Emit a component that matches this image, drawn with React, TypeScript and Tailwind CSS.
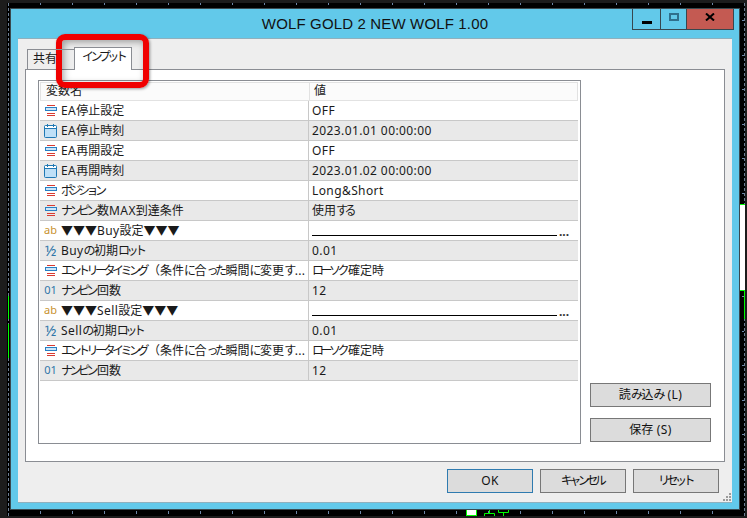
import { Fragment } from "react";

const FONT = "font-['Noto_Sans','Noto_Sans_CJK_JP',sans-serif]";

type Kind = "enum" | "date" | "str" | "frac" | "int";

const rows: { kind: Kind; name: string; value: string }[] = [
  { kind: "enum", name: "EA停止設定", value: "OFF" },
  { kind: "date", name: "EA停止時刻", value: "2023.01.01 00:00:00" },
  { kind: "enum", name: "EA再開設定", value: "OFF" },
  { kind: "date", name: "EA再開時刻", value: "2023.01.02 00:00:00" },
  { kind: "enum", name: "ポジション", value: "Long&Short" },
  { kind: "enum", name: "ナンピン数MAX到達条件", value: "使用する" },
  { kind: "str", name: "▼▼▼Buy設定▼▼▼", value: "" },
  { kind: "frac", name: "Buyの初期ロット", value: "0.01" },
  { kind: "enum", name: "エントリータイミング（条件に合った瞬間に変更す...", value: "ローソク確定時" },
  { kind: "int", name: "ナンピン回数", value: "12" },
  { kind: "str", name: "▼▼▼Sell設定▼▼▼", value: "" },
  { kind: "frac", name: "Sellの初期ロット", value: "0.01" },
  { kind: "enum", name: "エントリータイミング（条件に合った瞬間に変更す...", value: "ローソク確定時" },
  { kind: "int", name: "ナンピン回数", value: "12" },
];

// the reference font has narrow kana and wide latin, so each run gets its own tracking
function Jp({ text }: { text: string }) {
  const parts = text.split(/([\u3041-\u30ff]+|[A-Za-z0-9.:&() ]+)/).filter(Boolean);
  return (
    <>
      {parts.map((part, i) => {
        if (/^[\u3041-\u30ff]/.test(part)) {
          return (
            <span key={i} className="pr-[2px] tracking-[-3.5px]">
              {part}
            </span>
          );
        }
        if (/^[A-Za-z0-9.:&() ]/.test(part)) {
          return (
            <span key={i} className="tracking-[0.4px] whitespace-pre">
              {part}
            </span>
          );
        }
        return <Fragment key={i}>{part}</Fragment>;
      })}
    </>
  );
}

function RowIcon({ kind }: { kind: Kind }) {
  if (kind === "enum") {
    return (
      <svg width="12" height="12" viewBox="0 0 12 12">
        <rect x="2" y="0" width="8" height="1" fill="#d83a32" />
        <rect x="0" y="2" width="12" height="4" fill="#2a80c4" />
        <rect x="1" y="3" width="10" height="2" fill="#cfe6f8" />
        <rect x="2" y="8" width="8" height="1" fill="#d83a32" />
        <rect x="2" y="10" width="8" height="1" fill="#d83a32" />
      </svg>
    );
  }
  if (kind === "date") {
    return (
      <svg width="13" height="14" viewBox="0 0 13 14">
        <rect x="0.5" y="1.5" width="12" height="12" rx="1" fill="#bfe0f7" stroke="#1f78b4" />
        <rect x="1" y="2" width="11" height="2" fill="#fff" />
        <rect x="0.5" y="4" width="12" height="1" fill="#1f78b4" />
        <rect x="3" y="0" width="1" height="3" fill="#1f78b4" />
        <rect x="9" y="0" width="1" height="3" fill="#1f78b4" />
      </svg>
    );
  }
  if (kind === "str") return <span className="text-[11px] text-[#c8922e]">ab</span>;
  if (kind === "frac") return <span className="text-[15px] leading-none text-[#2f75a8]">½</span>;
  return <span className="text-[11px] text-[#2f75a8]">01</span>;
}

function Row({ row, index }: { row: (typeof rows)[number]; index: number }) {
  return (
    <div className={`flex h-5 border-b border-[#c8c8c8] ${index % 2 ? "bg-[#e9e9e9]" : "bg-white"}`}>
      <div className="flex w-[269px] shrink-0 items-center border-r border-[#c8c8c8] whitespace-nowrap">
        <div className="flex w-[21px] shrink-0 justify-center">
          <RowIcon kind={row.kind} />
        </div>
        <span>
          <Jp text={row.name} />
        </span>
      </div>
      <div className="flex flex-1 items-center pl-[3px]">
        {row.kind === "str" ? (
          <div className="flex items-end pt-1.5">
            <div className="h-px w-[245px] bg-black" />
            <span className="ml-0.5 h-1 text-xs leading-[0] font-bold text-[#333]">...</span>
          </div>
        ) : (
          <span>
            <Jp text={row.value} />
          </span>
        )}
      </div>
    </div>
  );
}

function Btn({ label, className }: { label: string; className: string }) {
  return (
    <div className={`flex h-6 items-center justify-center border bg-[#dcdcdc] text-[#111] ${className}`}>
      <span>
        <Jp text={label} />
      </span>
    </div>
  );
}

// ruler ticks and chart scraps showing behind the dialog
function ChartBackdrop() {
  const xs = Array.from({ length: 22 }, (_, i) => 40 + i * 32);
  const ys = Array.from({ length: 14 }, (_, i) => 20 + i * 34.5);
  return (
    <div className="absolute inset-0 overflow-hidden bg-black">
      <div className="absolute inset-x-0 top-0 h-[3px] bg-[#1c1c1c]" />
      <div className="absolute inset-x-0 bottom-0 h-[2px] bg-[#1c1c1c]" />
      <div className="absolute inset-y-0 left-0 w-[7px] bg-[#1c1c1c]" />
      <div className="absolute inset-y-0 right-0 w-0.5 bg-[#1c1c1c]" />
      <div className="absolute top-[3px] bottom-[2px] left-2 border-l border-dashed border-[#6d7f94]" />
      <div className="absolute top-[3px] bottom-[2px] right-[2px] border-l border-dashed border-[#6d7f94]" />
      {xs.map((x) => (
        <div key={x}>
          <div className="absolute top-[3px] h-0.5 w-px bg-[#6d87a8]" style={{ left: x }} />
          <div className="absolute top-[511px] h-[3px] w-px bg-[#6d87a8]" style={{ left: x }} />
        </div>
      ))}
      {ys.map((y) => (
        <div key={y} className="absolute right-[3px] h-px w-0.5 bg-[#6d87a8]" style={{ top: y }} />
      ))}
      <div className="absolute top-[204px] right-[2px] h-[87px] w-[7px] border-y border-l border-[#00ff00] bg-white" />
      <div className="absolute top-[291px] right-[2px] h-7 w-px bg-[#00ff00]" />
      <div className="absolute top-[296px] left-2 h-[23px] w-px bg-[#00ff00]" />
      <div className="absolute top-[324px] left-2 h-[34px] w-px bg-[#00ff00]" />
      <svg className="absolute top-[509px] left-[466px]" width="72" height="9" viewBox="0 0 72 9" fill="none">
        <rect x="0.5" y="0.5" width="10" height="6" fill="#fff" stroke="#00ff00" />
        <path d="M18.5 7V4.5H28.5V7M23.5 4.5V1M32.5 0V3.5H42.5V0M37.5 3.5V7" stroke="#00ff00" />
      </svg>
    </div>
  );
}

export default function App() {
  return (
    <div className={`relative h-[518px] w-[747px] overflow-hidden text-xs text-[#1a1a1a] ${FONT}`}>
      <ChartBackdrop />

      <div className="relative ml-[10px] flex w-[730px] flex-col pt-2">
        <div className="flex h-[502px] flex-col border border-[#3a4a50] bg-[#62c9ea] px-[7px] pb-[6px]">
          {/* title bar */}
          <div className="relative flex h-[29px] shrink-0 items-center justify-center">
            <span className="font-['Liberation_Sans',sans-serif] text-[15px] tracking-[0.15px] text-[#111]">
              WOLF GOLD 2 NEW WOLF 1.00
            </span>
            <div className="absolute top-0 -right-[2px] flex h-[21px] border border-t-0 border-[#37474f]">
              <div className="flex w-[28px] items-center justify-center border-r border-[#37474f] pt-1.5">
                <div className="h-[3px] w-[10px] bg-black" />
              </div>
              <div className="flex w-[26px] items-center justify-center border-r border-[#37474f] pb-1">
                <div className="h-2 w-2.5 border-2 border-[#2f6f8c]" />
              </div>
              <div className="flex w-[46px] items-center justify-center bg-[#c45a52] pb-1">
                <svg width="10" height="8" viewBox="0 0 10 8">
                  <path d="M1 0.5L9 7.5M9 0.5L1 7.5" stroke="#000" strokeWidth="2" />
                </svg>
              </div>
            </div>
          </div>

          {/* client area */}
          <div className="relative flex flex-1 flex-col border-y border-[#8fb0bd] bg-[#eeeeee] px-[7px] pt-2">
            <div className="relative z-10 -mb-px flex h-[23px] items-end pl-0.5 whitespace-nowrap">
              <div className="flex h-[21px] w-[47px] items-center border border-r-0 border-b-0 border-[#8a8d93] pb-0.5 pl-[5px]">
                共有
              </div>
              <div className="flex h-[23px] w-[58px] items-center border border-b-0 border-[#8a8d93] bg-white pb-1 pl-[7px]">
                <span>
                  <Jp text="インプット" />
                </span>
              </div>
            </div>

            <div className="flex h-[393px] border border-[#8a8d93] bg-white pt-[10px] pl-3">
              <div className="h-[364px] w-[543px] border border-[#8a8d93] p-px pr-0.5">
                <div className="flex h-[19px] border border-[#e2e2e2] bg-[#fbfbfb]">
                  <div className="w-[268px] pl-[5px]">変数名</div>
                  <div className="border-l border-[#e2e2e2] pl-1">値</div>
                </div>
                {rows.map((row, i) => (
                  <Row key={i} row={row} index={i} />
                ))}
              </div>
              <div className="ml-[9px] flex w-[121px] flex-col gap-[11px] self-end pb-[19px]">
                <Btn label="読み込み (L)" className="border-[#777]" />
                <Btn label="保存 (S)" className="border-[#777]" />
              </div>
            </div>

            <div className="mt-[7px] flex justify-end gap-[7px] pr-[6px]">
              <Btn label="OK" className="w-[86px] border-[#2f7bb0]" />
              <Btn label="キャンセル" className="w-[86px] border-[#777]" />
              <Btn label="リセット" className="w-[86px] border-[#777]" />
            </div>

            <svg className="absolute right-px bottom-px" width="9" height="9" viewBox="0 0 9 9" fill="#9a9a9a">
              <rect x="7" y="1" width="2" height="2" />
              <rect x="4" y="4" width="2" height="2" />
              <rect x="7" y="4" width="2" height="2" />
              <rect x="1" y="7" width="2" height="2" />
              <rect x="4" y="7" width="2" height="2" />
              <rect x="7" y="7" width="2" height="2" />
            </svg>
          </div>
        </div>
      </div>

      {/* red highlight drawn over the tab */}
      <div className="absolute top-[34px] left-[56px] h-[54px] w-[93px] rounded-[9px] border-[6px] border-[#f00000] shadow-[inset_2px_2px_7px_rgba(0,0,0,0.35),1px_1px_3px_rgba(0,0,0,0.4)]" />
    </div>
  );
}
